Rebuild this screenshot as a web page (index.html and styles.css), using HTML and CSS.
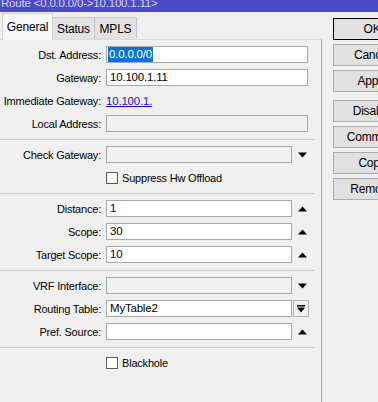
FILE: index.html
```html
<!DOCTYPE html>
<html lang="en">
<head>
  <title>Route</title>
  <meta charset="UTF-8">
  <link rel="stylesheet" href="styles.css">
</head>
<body>
<div class="titlebar"><span class="title">Route &lt;0.0.0.0/0-&gt;10.100.1.11&gt;</span></div>
<div class="window">
  <div class="main">
    <div class="tabs">
      <div class="tab active">General</div>
      <div class="tab">Status</div>
      <div class="tab">MPLS</div>
    </div>
    <div class="page">
      <div class="section first">
        <div class="row">
          <label>Dst. Address:</label>
          <div class="field wide"><span class="selected">0.0.0.0/0</span></div>
        </div>
        <div class="row">
          <label>Gateway:</label>
          <div class="field wide">10.100.1.11</div>
        </div>
        <div class="row">
          <label>Immediate Gateway:</label>
          <a class="link" href="#">10.100.1.</a>
        </div>
        <div class="row">
          <label>Local Address:</label>
          <div class="field wide disabled"></div>
        </div>
      </div>

      <div class="section">
        <div class="row">
          <label>Check Gateway:</label>
          <div class="field disabled"></div>
          <span class="arrow"><svg width="9" height="6"><path d="M0 0.5 H9 L4.5 5.5Z"/></svg></span>
        </div>
        <div class="row">
          <span></span>
          <div class="check"><span class="box"></span>Suppress Hw Offload</div>
        </div>
      </div>

      <div class="section">
        <div class="row">
          <label>Distance:</label>
          <div class="field">1</div>
          <span class="arrow"><svg width="9" height="6"><path d="M0 5.5 H9 L4.5 0.5Z"/></svg></span>
        </div>
        <div class="row">
          <label>Scope:</label>
          <div class="field">30</div>
          <span class="arrow"><svg width="9" height="6"><path d="M0 5.5 H9 L4.5 0.5Z"/></svg></span>
        </div>
        <div class="row">
          <label>Target Scope:</label>
          <div class="field">10</div>
          <span class="arrow"><svg width="9" height="6"><path d="M0 5.5 H9 L4.5 0.5Z"/></svg></span>
        </div>
      </div>

      <div class="section">
        <div class="row">
          <label>VRF Interface:</label>
          <div class="field disabled"></div>
          <span class="arrow"><svg width="9" height="6"><path d="M0 0.5 H9 L4.5 5.5Z"/></svg></span>
        </div>
        <div class="row">
          <label>Routing Table:</label>
          <div class="field">MyTable2</div>
          <span class="drop-btn"><svg width="8" height="8"><rect x="0" y="0" width="8" height="1.5"/><path d="M0 2.5 H8 L4 7.5Z"/></svg></span>
        </div>
        <div class="row">
          <label>Pref. Source:</label>
          <div class="field"></div>
          <span class="arrow"><svg width="9" height="6"><path d="M0 5.5 H9 L4.5 0.5Z"/></svg></span>
        </div>
      </div>

      <div class="section last">
        <div class="row">
          <span></span>
          <div class="check"><span class="box"></span>Blackhole</div>
        </div>
      </div>
    </div>
  </div>

  <div class="actions">
    <button class="btn default">OK</button>
    <button class="btn">Cancel</button>
    <button class="btn group-end">Apply</button>
    <button class="btn">Disable</button>
    <button class="btn">Comment</button>
    <button class="btn">Copy</button>
    <button class="btn">Remove</button>
  </div>
</div>
</body>
</html>
```

FILE: styles.css
```css
body {
  margin: 0;
  width: 378px;
  height: 402px;
  overflow: hidden;
  background: #f0f0f0;
  font-family: "Liberation Sans", Arial, sans-serif;
  font-size: 11px;
  letter-spacing: -0.2px;
  color: #000;
}

.titlebar {
  height: 12px;
  background: #4b4bc8;
  overflow: hidden;
}

.title {
  display: block;
  margin-top: -4px;
  padding-left: 1px;
  line-height: 14px;
  font-size: 11.5px;
  color: #d6d6ff;
  white-space: nowrap;
}

.window {
  display: flex;
  height: 390px;
}

.main {
  display: flex;
  flex-direction: column;
  width: 322px;
  flex-shrink: 0;
}

.tabs {
  display: flex;
  align-items: flex-end;
  height: 28px;
  padding-left: 2px;
  border-bottom: 1px solid #dadada;
  box-sizing: border-box;
}

.tab {
  width: 43px;
  height: 22px;
  line-height: 22px;
  text-align: center;
  background: #e3e3e3;
  border: 1px solid #c4c4c4;
  border-bottom: none;
  margin-right: -1px;
  box-sizing: border-box;
  font-size: 12px;
}

.tab.active {
  width: 51px;
  height: 27px;
  line-height: 26px;
  background: #f7f7f7;
  border-color: #d2d2d2;
  position: relative;
  z-index: 1;
  margin-bottom: -1px;
}

.page {
  flex: 1;
  border-right: 1px solid #a9a9a9;
}

.section {
  width: 314px;
  display: grid;
  row-gap: 6px;
  padding: 6px 0 7px;
  border-bottom: 1px solid #c8c8c8;
}

.section.last {
  border-bottom: none;
}

.row {
  display: grid;
  grid-template-columns: 101px 191px 16px;
  height: 17px;
  align-items: center;
}

.row label {
  display: flex;
  justify-content: flex-end;
  white-space: nowrap;
  width: 101px;
}

.row > :nth-child(2) {
  margin-left: 5px;
}

.field {
  height: 17px;
  box-sizing: border-box;
  border: 1px solid #a8a8a8;
  background: #fff;
  padding-left: 3px;
  line-height: 15px;
  font-size: 11.5px;
  white-space: nowrap;
  overflow: hidden;
}

.field.wide {
  grid-column: 2 / 4;
}

.field.disabled {
  background: #f0f0f0;
}

.selected {
  background: #0a74da;
  color: #fff;
  margin-left: -2px;
  padding: 0 1px;
  display: inline-block;
  line-height: 15px;
}

.link {
  color: #1a0dcc;
  text-decoration: underline;
  grid-column: 2 / 4;
  font-size: 11.5px;
}

.arrow {
  display: flex;
  justify-content: center;
  padding-left: 4px;
}

.arrow svg {
  fill: #000;
}

.drop-btn {
  display: flex;
  align-items: center;
  justify-content: center;
  width: 16px;
  height: 17px;
  margin-left: 1px;
  box-sizing: border-box;
  border: 1px solid #b4b4b4;
  background: #f0f0f0;
}

.drop-btn svg {
  fill: #000;
}

.check {
  display: flex;
  align-items: center;
  grid-column: 2 / 4;
  white-space: nowrap;
}

.check .box {
  width: 12px;
  height: 12px;
  box-sizing: border-box;
  border: 1px solid #5a5a5a;
  background: #fff;
  margin-right: 4px;
}

.actions {
  display: flex;
  flex-direction: column;
  padding: 6px 0 0 11px;
}

.btn {
  width: 78px;
  height: 22px;
  margin-bottom: 4px;
  padding: 0;
  background: #e1e1e1;
  border: 1px solid #adadad;
  font-family: inherit;
  font-size: 12px;
  letter-spacing: -0.2px;
  color: #000;
  flex-shrink: 0;
}

.btn.default {
  border-color: #000;
}

.btn.group-end {
  margin-bottom: 8px;
}
```
